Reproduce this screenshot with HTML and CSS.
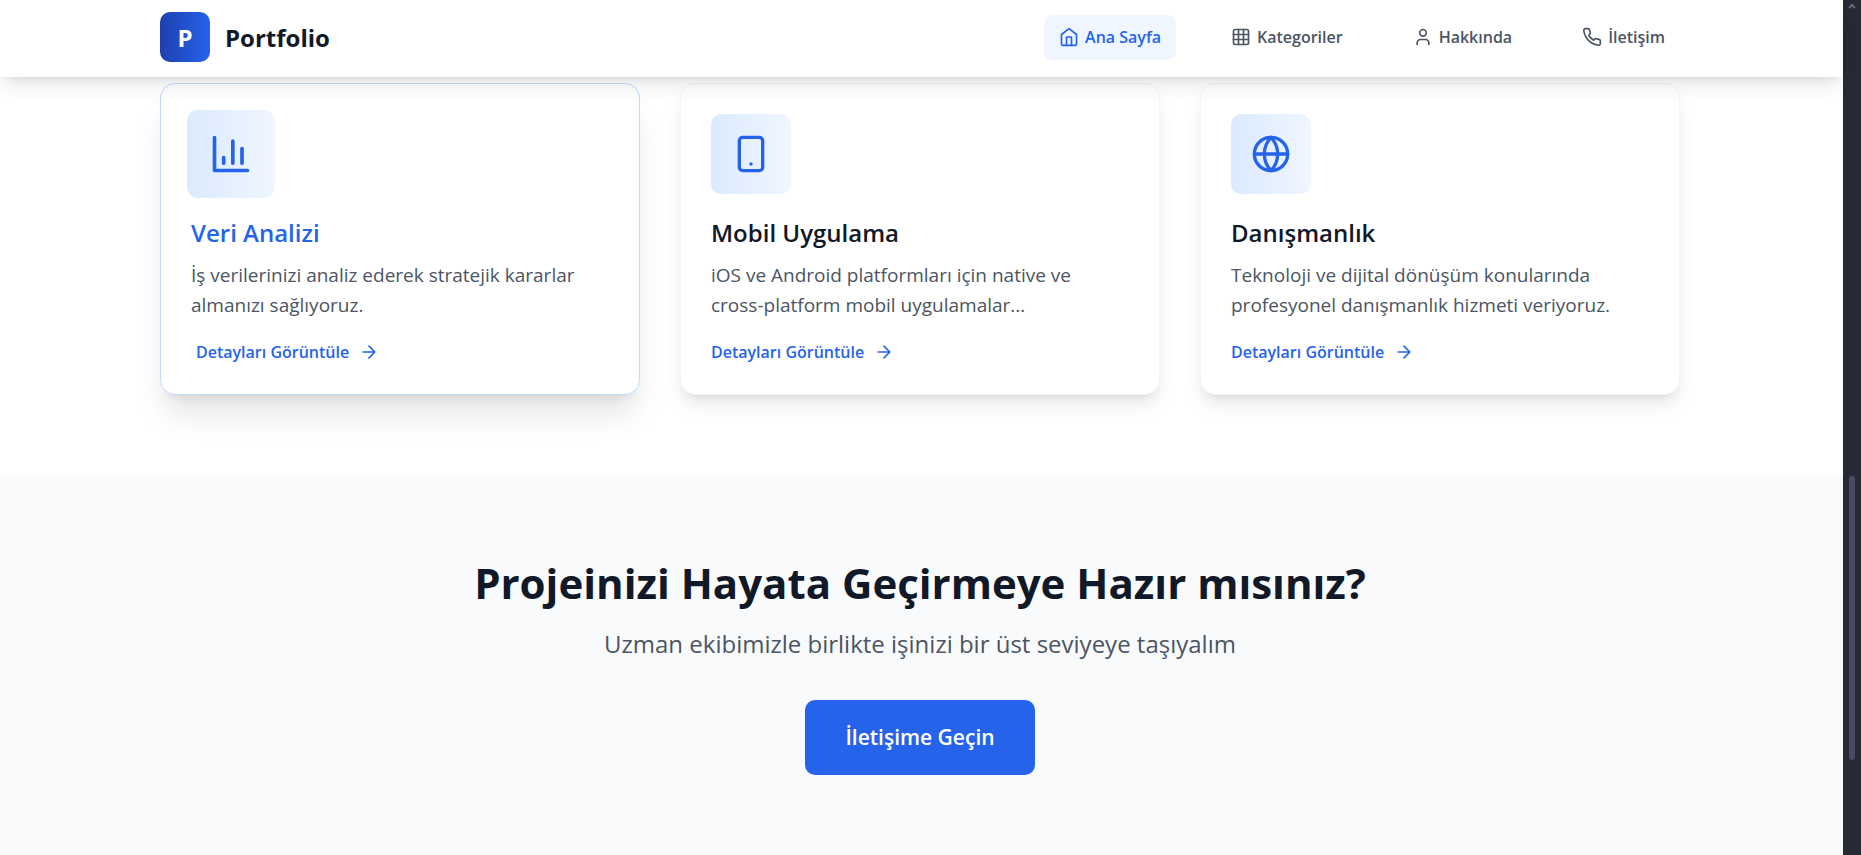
FILE: index.html
```html
<!DOCTYPE html>
<html lang="tr">
<head>
  <meta charset="UTF-8">
  <meta name="viewport" content="width=device-width, initial-scale=1.0">
  <title>Portfolio</title>
  <link rel="stylesheet" href="styles.css">
</head>
<body>
  <div class="page">
    <header class="header">
      <div class="container header-inner">
        <a class="brand" href="#">
          <span class="brand-logo">P</span>
          <span class="brand-name">Portfolio</span>
        </a>

        <nav class="nav">
          <a class="nav-link active" href="#">
            <svg class="icon" viewBox="0 0 24 24"><path d="M3 9l9-7 9 7v11a2 2 0 0 1-2 2H5a2 2 0 0 1-2-2z"/><path d="M9 22V12h6v10"/></svg>
            Ana Sayfa
          </a>
          <a class="nav-link" href="#kategoriler">
            <svg class="icon" viewBox="0 0 24 24"><rect x="3" y="3" width="18" height="18" rx="2"/><path d="M3 9h18M3 15h18M9 3v18M15 3v18"/></svg>
            Kategoriler
          </a>
          <a class="nav-link" href="#hakkinda">
            <svg class="icon" viewBox="0 0 24 24"><path d="M19 21v-2a4 4 0 0 0-4-4H9a4 4 0 0 0-4 4v2"/><circle cx="12" cy="7" r="4"/></svg>
            Hakkında
          </a>
          <a class="nav-link" href="#iletisim">
            <svg class="icon" viewBox="0 0 24 24"><path d="M22 16.92v3a2 2 0 0 1-2.18 2 19.79 19.79 0 0 1-8.63-3.07 19.5 19.5 0 0 1-6-6 19.79 19.79 0 0 1-3.07-8.67A2 2 0 0 1 4.11 2h3a2 2 0 0 1 2 1.72 12.84 12.84 0 0 0 .7 2.81 2 2 0 0 1-.45 2.11L8.09 9.91a16 16 0 0 0 6 6l1.27-1.27a2 2 0 0 1 2.11-.45 12.84 12.84 0 0 0 2.81.7A2 2 0 0 1 22 16.92z"/></svg>
            İletişim
          </a>
        </nav>
      </div>
    </header>

    <main>
      <section class="services" id="kategoriler">
        <div class="container cards">
          <article class="card active">
            <div class="card-icon">
              <svg class="icon" viewBox="0 0 24 24"><path d="M3 3v18h18"/><path d="M18 17V9M13 17V5M8 17v-3"/></svg>
            </div>
            <h3>Veri Analizi</h3>
            <p>İş verilerinizi analiz ederek stratejik kararlar almanızı sağlıyoruz.</p>
            <a class="card-link" href="#veri-analizi">
              Detayları Görüntüle
              <svg class="icon" viewBox="0 0 24 24"><path d="M5 12h14M12 5l7 7-7 7"/></svg>
            </a>
          </article>

          <article class="card">
            <div class="card-icon">
              <svg class="icon" viewBox="0 0 24 24"><rect x="5" y="2" width="14" height="20" rx="2"/><path d="M12 18h.01"/></svg>
            </div>
            <h3>Mobil Uygulama</h3>
            <p>iOS ve Android platformları için native ve <span class="nowrap">cross-platform</span> mobil uygulamalar...</p>
            <a class="card-link" href="#mobil-uygulama">
              Detayları Görüntüle
              <svg class="icon" viewBox="0 0 24 24"><path d="M5 12h14M12 5l7 7-7 7"/></svg>
            </a>
          </article>

          <article class="card">
            <div class="card-icon">
              <svg class="icon" viewBox="0 0 24 24"><circle cx="12" cy="12" r="10"/><path d="M2 12h20"/><path d="M12 2a14.5 14.5 0 0 0 0 20 14.5 14.5 0 0 0 0-20"/></svg>
            </div>
            <h3>Danışmanlık</h3>
            <p>Teknoloji ve dijital dönüşüm konularında profesyonel danışmanlık hizmeti veriyoruz.</p>
            <a class="card-link" href="#danismanlik">
              Detayları Görüntüle
              <svg class="icon" viewBox="0 0 24 24"><path d="M5 12h14M12 5l7 7-7 7"/></svg>
            </a>
          </article>
        </div>
      </section>

      <section class="cta" id="iletisim">
        <div class="container">
          <h2>Projeinizi Hayata Geçirmeye Hazır mısınız?</h2>
          <p>Uzman ekibimizle birlikte işinizi bir üst seviyeye taşıyalım</p>
          <button class="cta-btn" type="button">İletişime Geçin</button>
        </div>
      </section>
    </main>
  </div>

  <div class="scrollbar" aria-hidden="true">
    <svg class="scroll-arrow" viewBox="0 0 8 6"><path d="M1 5l3-3 3 3"/></svg>
    <div class="scroll-thumb"></div>
  </div>
</body>
</html>
```
FILE: styles.css
```css
* {
  box-sizing: border-box;
}

body {
  margin: 0;
  min-height: 100vh;
  display: grid;
  grid-template-columns: 1fr 18px;
  font-family: 'Open Sans', 'Noto Sans', sans-serif;
  color: #111827;
  background: #fff;
}

h2, h3, p {
  margin: 0;
}

a {
  text-decoration: none;
}

.nowrap {
  white-space: nowrap;
}

.page {
  display: flex;
  flex-direction: column;
  min-width: 0;
}

.container {
  max-width: 1603px;
  margin: 0 auto;
  padding: 0 43px 0 40px;
}

.icon {
  width: 20px;
  height: 20px;
  flex-shrink: 0;
  fill: none;
  stroke: currentColor;
  stroke-width: 2;
  stroke-linecap: round;
  stroke-linejoin: round;
}

/* Header */
.header {
  position: sticky;
  top: 0;
  z-index: 10;
  background: #fff;
  box-shadow: 0 12px 19px -4px rgba(0, 0, 0, 0.1), 0 5px 8px -5px rgba(0, 0, 0, 0.1);
}

.header-inner {
  display: flex;
  align-items: center;
  justify-content: space-between;
  padding-top: 12px;
  padding-bottom: 15px;
}

.brand {
  display: flex;
  align-items: center;
  gap: 15px;
  font-size: 24px;
  font-weight: 700;
  color: #111827;
}

.brand-logo {
  width: 50px;
  height: 50px;
  display: flex;
  align-items: center;
  justify-content: center;
  border-radius: 10px;
  color: #fff;
  background: linear-gradient(90deg, #1e40af, #2563eb);
}

.nav {
  display: flex;
  gap: 40px;
}

.nav-link {
  display: flex;
  align-items: center;
  gap: 6px;
  padding: 10px 15px;
  border-radius: 8px;
  font-size: 16px;
  font-weight: 600;
  line-height: 25px;
  color: #4b5563;
}

.nav-link.active {
  color: #2563eb;
  background: #eff6ff;
}

/* Cards */
.services {
  padding: 6px 0 80px;
}

.cards {
  display: grid;
  grid-template-columns: repeat(3, 1fr);
  gap: 40px;
}

.card {
  padding: 30px;
  border: 1px solid #f3f4f6;
  border-radius: 15px;
  background: #fff;
  box-shadow: 0 12px 19px -4px rgba(0, 0, 0, 0.1), 0 5px 8px -5px rgba(0, 0, 0, 0.1);
}

.card.active {
  border-color: #bfdbfe;
  box-shadow: 0 25px 31px -6px rgba(0, 0, 0, 0.1), 0 10px 12px -8px rgba(0, 0, 0, 0.1);
}

.card-icon {
  width: 80px;
  height: 80px;
  margin-bottom: 22px;
  display: flex;
  align-items: center;
  justify-content: center;
  border-radius: 10px;
  color: #2563eb;
  background: linear-gradient(90deg, #dbeafe, #eff6ff);
}

.card-icon .icon {
  width: 40px;
  height: 40px;
}

.card.active .card-icon {
  transform: scale(1.1);
}

.card h3 {
  margin-bottom: 10px;
  font-size: 24px;
  font-weight: 600;
  line-height: 34px;
}

.card.active h3 {
  color: #2563eb;
}

.card p {
  margin-bottom: 20px;
  font-size: 19px;
  line-height: 30px;
  color: #4b5563;
}

.card-link {
  display: flex;
  align-items: center;
  gap: 10px;
  font-size: 16px;
  font-weight: 600;
  line-height: 24px;
  color: #2563eb;
}

.card.active .card-link {
  padding-left: 5px;
}

/* Call to action */
main {
  flex: 1;
  display: flex;
  flex-direction: column;
}

.cta {
  flex: 1;
  padding: 80px 0;
  text-align: center;
  background: #f9fafb;
}

.cta h2 {
  margin-bottom: 15px;
  font-size: 42px;
  font-weight: 700;
  line-height: 55px;
}

.cta p {
  margin-bottom: 38px;
  font-size: 24px;
  line-height: 37px;
  color: #4b5563;
}

.cta-btn {
  padding: 20px 40px;
  border: none;
  border-radius: 10px;
  font-family: inherit;
  font-size: 21px;
  font-weight: 600;
  line-height: 35px;
  color: #fff;
  background: #2563eb;
  cursor: pointer;
}

/* Scrollbar */
.scrollbar {
  height: 100vh;
  position: sticky;
  top: 0;
  background: #252a35;
}

.scroll-arrow {
  position: absolute;
  top: 3px;
  left: 5px;
  width: 8px;
  height: 6px;
  fill: none;
  stroke: #6b6b6b;
  stroke-width: 2;
}

.scroll-thumb {
  position: absolute;
  top: 476px;
  left: 6px;
  width: 6px;
  height: 284px;
  border-radius: 3px;
  background: #4a4c63;
}
```
